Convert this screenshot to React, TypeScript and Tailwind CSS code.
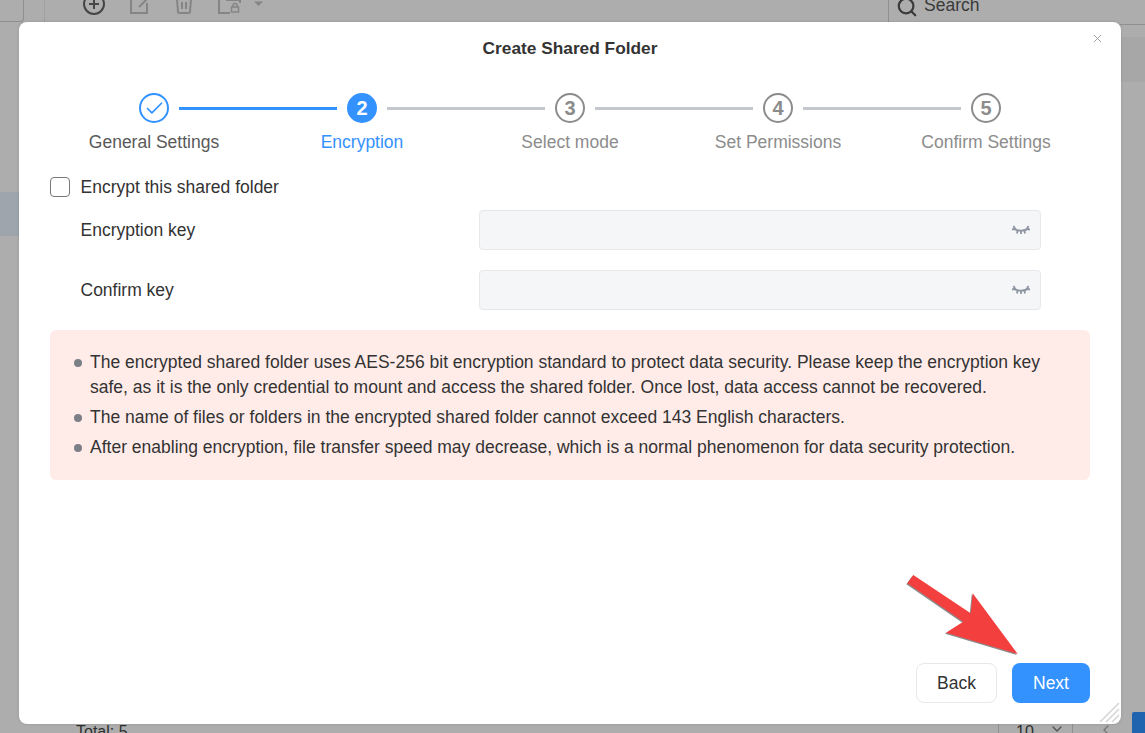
import { Check, Search, ChevronDown, ChevronLeft, X } from 'lucide-react'

const steps = ['General Settings', 'Encryption', 'Select mode', 'Set Permissions', 'Confirm Settings']

const notes = [
  'The encrypted shared folder uses AES-256 bit encryption standard to protect data security. Please keep the encryption key safe, as it is the only credential to mount and access the shared folder. Once lost, data access cannot be recovered.',
  'The name of files or folders in the encrypted shared folder cannot exceed 143 English characters.',
  'After enabling encryption, file transfer speed may decrease, which is a normal phenomenon for data security protection.',
]

function ClosedEye() {
  return (
    <svg width="18" height="11" viewBox="0 0 18 11" fill="none" stroke="#8f96a3" strokeWidth="1.8">
      <path d="M1.5 3 C5 6.5 13 6.5 16.5 3" />
      <path d="M1.5 1 L3.5 4.5 M5.5 5.5 L5 8.5 M9 6 L9 9 M12.5 5.5 L13 8.5 M16.5 1 L14.5 4.5" />
      <path d="M0 4.5 L3 4 M18 4.5 L15 4" />
    </svg>
  )
}

function ToolbarIcons() {
  return (
    <svg className="absolute left-0 top-0" width="300" height="22" viewBox="0 0 300 22" fill="none">
      <circle cx="94" cy="4" r="10" stroke="#454545" strokeWidth="2" />
      <path d="M94 -1 V9 M89 4 H99" stroke="#454545" strokeWidth="2" />
      <g stroke="#858585" strokeWidth="2">
        <path d="M139 -1 H131 V13 H147 V3" />
        <path d="M139 7 L148 -2" />
        <path d="M177 -1 L178 12 Q178 13 179 13 H189 Q190 13 190 12 L191 -1" />
        <path d="M182 2 V9 M186 2 V9" />
        <path d="M229 -1 H219 V13 H230" />
        <path d="M226 0 H240 V3" />
        <rect x="231.5" y="7" width="7" height="5" strokeWidth="1.5" />
        <path d="M233 7 V5.5 A2 2 0 0 1 237 5.5 V7" strokeWidth="1.5" />
      </g>
      <polygon points="254,1.5 263,1.5 258.5,6" fill="#858585" />
    </svg>
  )
}

function KeyField({ label }: { label: string }) {
  return (
    <div className="flex items-center h-10 pl-[30.5px] pr-[49px]">
      <span className="w-[398.5px] text-[#333]">{label}</span>
      <div className="flex-1 h-10 flex items-center justify-end pr-[10px] bg-[#f5f6f8] border border-[#e6e8ec] rounded-[4px]">
        <ClosedEye />
      </div>
    </div>
  )
}

function Stepper() {
  return (
    <div>
      <div className="flex items-center gap-[10px] pl-[89px]">
        <div className="w-[30px] h-[30px] rounded-full border-2 border-[#3492ff] flex items-center justify-center">
          <Check size={21} color="#3492ff" strokeWidth={2} />
        </div>
        <div className="w-[158px] h-[3px] bg-[#3492ff]" />
        <div className="w-[30px] h-[30px] rounded-full bg-[#3492ff] text-white font-bold text-[20px] flex items-center justify-center">2</div>
        {[3, 4, 5].map(n => (
          <div key={n} className="flex items-center gap-[10px]">
            <div className="w-[158px] h-[3px] bg-[#c4c8ce]" />
            <div className="w-[30px] h-[30px] rounded-full border-2 border-[#8c8c8c] text-[#8c8c8c] font-bold text-[20px] flex items-center justify-center">{n}</div>
          </div>
        ))}
      </div>
      <div className="grid grid-cols-5 mt-[6px] leading-[26px] text-center">
        {steps.map((s, i) => (
          <span key={s} className={i === 0 ? 'text-[#595959]' : i === 1 ? 'text-[#3492ff]' : 'text-[#8c8c8c]'}>{s}</span>
        ))}
      </div>
    </div>
  )
}

export default function App() {
  return (
    <div className="relative w-[1145px] h-[733px] overflow-hidden bg-[#adadad] pt-[22px] pl-[19px] text-[17.5px] font-['Liberation_Sans',Arial,sans-serif]">
      {/* page behind the dialog */}
      <div className="absolute left-0 top-0 w-[24px] h-[22px] border-r border-b border-[#8f8f8f] rounded-br-[4px]" />
      <div className="absolute left-[44px] top-0 w-px h-[22px] bg-[#a0a0a0]" />
      <ToolbarIcons />
      <div className="absolute left-[888px] top-0 w-[257px] h-[25px] border-l border-b border-[#8f8f8f] flex items-center pl-[7px] gap-[6px] text-[#3a3a3a] text-[17.5px]">
        <Search size={22} strokeWidth={2.4} className="-mt-[11px]" />
        <span className="-mt-[13px]">Search</span>
      </div>
      <div className="absolute left-[1121px] top-[37px] w-[24px] h-[45px] bg-[#a7a7a7]" />
      <div className="absolute left-0 top-[192px] w-[19px] h-[44px] bg-[#9ea5ac]" />
      <div className="absolute left-[76px] top-[720px] text-[16px] text-[#2f2f2f]">Total: 5</div>
      <div className="absolute left-[998px] top-[724px] w-[75px] h-[9px] border-x border-[#8f8f8f]" />
      <div className="absolute left-[1016px] top-[720px] text-[16px] text-[#2f2f2f]">10</div>
      <ChevronDown className="absolute left-[1049px] top-[721px]" size={16} color="#555" />
      <ChevronLeft className="absolute left-[1098px] top-[722px]" size={16} color="#777" />
      <div className="absolute left-[1132px] top-[712px] w-[13px] h-[21px] bg-[#2063ae] rounded-tl-[2px]" />

      {/* dialog */}
      <div className="relative w-[1102px] h-[702px] bg-white rounded-[8px] shadow-[0_0_3px_rgba(0,0,0,0.15)] px-[31px]">
        <h2 className="h-[52px] pt-[14px] text-center text-[17.3px] leading-[24px] font-bold text-[#333]">Create Shared Folder</h2>
        <X className="absolute right-[17px] top-[10px]" size={13} color="#8c8c8c" strokeWidth={1.5} />

        <div className="pt-[19px]">
          <Stepper />
        </div>

        <label className="flex items-center gap-[10.5px] mt-[20px] h-[24px] text-[#333]">
          <span className="w-5 h-5 rounded-[4px] border border-[#777] bg-white" />
          Encrypt this shared folder
        </label>

        <div className="mt-[11px] flex flex-col gap-5">
          <KeyField label="Encryption key" />
          <KeyField label="Confirm key" />
        </div>

        <ul className="mt-5 h-[150px] rounded-[6px] bg-[#ffece9] pl-[40px] pr-[30px] pt-[20px] text-[#333] leading-[25px]">
          {notes.map(n => (
            <li key={n} className="relative mb-[5px]">
              <span className="absolute -left-[16px] top-[9px] w-2 h-2 rounded-full bg-[#7b8087]" />
              {n}
            </li>
          ))}
        </ul>

        <div className="absolute right-[31px] bottom-[21px] flex gap-[15px]">
          <button className="w-[81px] h-10 rounded-[8px] bg-white border border-[#e6e8ec] text-[#333]">Back</button>
          <button className="w-[78px] h-10 rounded-[8px] bg-[#3492ff] text-white">Next</button>
        </div>

        {/* resize grip */}
        <svg className="absolute right-0 bottom-0" width="22" height="22" viewBox="0 0 22 22" stroke="#d4d4d4" strokeWidth="1.5">
          <path d="M1 20 L20 1 M7 20 L20 7 M13 20 L20 13" />
        </svg>
      </div>

      {/* annotation arrow */}
      <svg className="absolute left-0 top-0 drop-shadow-[-1px_1px_0_rgba(0,0,0,0.45)]" width="1145" height="733" viewBox="0 0 1145 733">
        <polygon points="913.3,575 970.7,613.3 972.7,593.3 1017.7,654 946,632.7 963.3,621.7 907.3,583.3" fill="#f43f3f" />
      </svg>
    </div>
  )
}
